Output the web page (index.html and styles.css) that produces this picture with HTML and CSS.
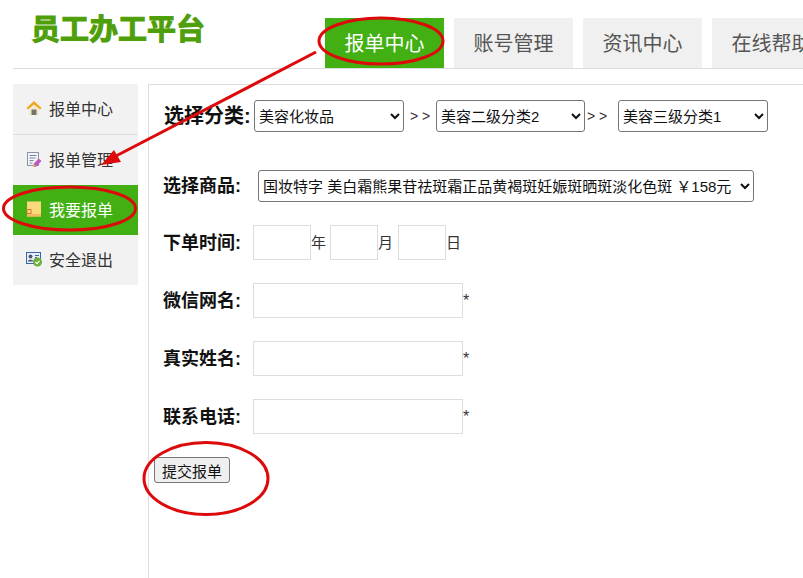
FILE: index.html
```html
<!DOCTYPE html>
<html lang="zh">
<head>
<meta charset="utf-8">
<title>员工办工平台</title>
<link rel="stylesheet" href="styles.css">
</head>
<body>
<div class="page">
  <header class="header">
    <div class="logo">员工办工平台</div>
    <nav class="tabs">
      <a class="tab active">报单中心</a>
      <a class="tab">账号管理</a>
      <a class="tab">资讯中心</a>
      <a class="tab">在线帮助</a>
    </nav>
  </header>
  <div class="main">
    <aside class="side">
      <a class="item">
        <svg class="ico" viewBox="0 0 16 16"><path d="M.5 8 8 1l7.500 7-1.500 1.500L8 4.500 2 9.500z" fill="#f2a51e"/><path d="M3 9.500 8 5.200l5 4.300V15H3z" fill="#f3e9cf"/><rect x="5.500" y="9.500" width="5" height="5.500" fill="#77736e"/></svg>
        报单中心</a>
      <a class="item">
        <svg class="ico" viewBox="0 0 16 16"><rect x="1.500" y="1.500" width="11" height="13" fill="#f4f4f8" stroke="#8a93a8"/><path d="M3.500 4.500h7M3.500 7h6M3.500 9.500h4M3.500 12h3" stroke="#7a86a0"/><path d="m7.500 13 5-5.500 3 2.500-5 5.500-3 .5z" fill="#b95cc0"/><path d="m7.500 13 2 2-3 .5z" fill="#e8c030"/></svg>
        报单管理</a>
      <a class="item on">
        <svg class="ico large" viewBox="0 0 16 16"><rect x="1" y=".5" width="14" height="15" fill="#fdd97e"/><rect x="1" y="13" width="14" height="2.500" fill="#f6b860"/><rect x="1" y="8.500" width="4" height="4" fill="none" stroke="#cf7d33"/></svg>
        我要报单</a>
      <a class="item">
        <svg class="ico" viewBox="0 0 16 16"><rect x=".5" y="1.500" width="14" height="11" fill="#e8eef8" stroke="#3a62b0"/><circle cx="4.500" cy="5.500" r="2" fill="#50586a"/><path d="M1.800 10.500c0-2.500 5.400-2.500 5.400 0z" fill="#50586a"/><path d="M9 4.500h4M9 6.500h2" stroke="#3a62b0"/><circle cx="11.500" cy="11" r="4.500" fill="#6cb03c"/><path d="m9.500 11 1.500 1.600 2.600-2.800" fill="none" stroke="#fff" stroke-width="1.200"/></svg>
        安全退出</a>
    </aside>
    <form class="content">
      <div class="row-cat">
        <label class="big">选择分类:</label>
        <select class="sel s1"><option>美容化妆品</option></select>
        <span class="gt g1">&gt; &gt;</span>
        <select class="sel s2"><option>美容二级分类2</option></select>
        <span class="gt g2">&gt; &gt;</span>
        <select class="sel s3"><option>美容三级分类1</option></select>
      </div>
      <div class="row-prod">
        <label class="lab">选择商品:</label>
        <select class="sel prod"><option>国妆特字 美白霜熊果苷祛斑霜正品黄褐斑妊娠斑晒斑淡化色斑 ￥158元</option></select>
      </div>
      <div class="row">
        <label class="lab">下单时间:</label>
        <input class="ipt y"><span class="u">年</span>
        <input class="ipt d"><span class="u wide">月</span>
        <input class="ipt d"><span class="u">日</span>
      </div>
      <div class="row">
        <label class="lab">微信网名:</label>
        <input class="ipt w"><span class="star">*</span>
      </div>
      <div class="row">
        <label class="lab">真实姓名:</label>
        <input class="ipt w"><span class="star">*</span>
      </div>
      <div class="row">
        <label class="lab">联系电话:</label>
        <input class="ipt w"><span class="star">*</span>
      </div>
      <button type="button" class="btn">提交报单</button>
    </form>
  </div>
  <svg class="marks" viewBox="0 0 803 578" width="803" height="578">
    <g fill="none" stroke="#dc0a0a" stroke-width="3">
      <ellipse cx="381" cy="41" rx="62" ry="23"/>
      <ellipse cx="69.500" cy="208.500" rx="66" ry="21.500"/>
      <ellipse cx="206" cy="478.500" rx="62" ry="36"/>
      <path d="M316 52 114 157"/>
    </g>
    <path d="m101 165 13-15 7 12z" fill="#dc0a0a"/>
  </svg>
</div>
</body>
</html>
```

FILE: styles.css
```css
* { box-sizing: border-box; }
html, body { margin: 0; padding: 0; }
body {
  background: #fff;
  color: #111;
  font-family: "Liberation Sans", "Noto Sans CJK SC", sans-serif;
  font-size: 14px;
  overflow: hidden;
}
.page { position: relative; width: 803px; height: 578px; overflow: hidden; }
.header {
  display: flex;
  height: 69px;
  margin-left: 13px;
  border-bottom: 1px solid #ddd;
}
.logo {
  flex: none;
  width: 312px;
  padding: 12px 0 0 18px;
  font-size: 29px;
  line-height: 36px;
  font-weight: 700;
  color: #4f9f0a;
  -webkit-text-stroke: 1px #4f9f0a;
}
.tabs { display: flex; gap: 10px; padding-top: 18px; flex: none; }
.tab {
  width: 119px;
  height: 50px;
  background: #f0f0f0;
  color: #555;
  font-size: 20px;
  line-height: 52px;
  text-align: center;
}
.tab.active { background: #42b012; color: #fff; }
.main { display: flex; margin-top: 15px; margin-left: 13px; }
.side { width: 125px; height: 201px; background: #f2f2f2; flex: none; }
.item {
  display: flex;
  align-items: center;
  gap: 7px;
  height: 50px;
  padding-left: 13px;
  padding-bottom: 2px;
  font-size: 16px;
  color: #333;
}
.item:first-child { height: 51px; border-bottom: 1px solid #ddd; }
.item.on { background: #42b012; color: #fff; }
.ico { width: 16px; height: 16px; flex: none; }
.content {
  flex: 1;
  min-height: 494px;
  margin-left: 10px;
  border-left: 1px solid #ddd;
  border-top: 1px solid #ddd;
  padding-left: 14px;
}
.row-cat { display: flex; align-items: center; height: 32px; margin-top: 15px; }
.big { width: 90px; margin-left: 1px; padding-bottom: 4px; flex: none; font-size: 20px; font-weight: 700; color: #111; white-space: nowrap; }
.sel {
  height: 32px;
  border: 1px solid #767676;
  border-radius: 3px;
  background: #fff;
  color: #111;
  font-family: inherit;
  font-size: 15px;
  padding: 0;
  flex: none;
}
.s1 { width: 150px; }
.s2 { width: 149px; }
.s3 { width: 150px; }
.gt { font-size: 14px; color: #333; flex: none; }
.g1 { width: 32px; padding-left: 6px; }
.g2 { width: 33px; padding-left: 2px; }
.row-prod { display: flex; align-items: center; height: 32px; margin-top: 38px; }
.lab { width: 90px; padding-bottom: 4px; flex: none; font-size: 18px; font-weight: 700; color: #111; white-space: nowrap; }
.row-prod .lab { width: 95px; }
.prod { width: 496px; }
.row { display: flex; align-items: center; height: 35px; margin-top: 23px; }
.ipt {
  display: block;
  height: 35px;
  border: 1px solid #ddd;
  background: #fff;
  padding: 0;
  flex: none;
}
.y { width: 58px; }
.d { width: 48px; }
.w { width: 210px; }
.u { width: 19px; padding-bottom: 2px; flex: none; font-size: 15px; color: #333; }
.u.wide { width: 20px; }
.star { font-size: 16px; color: #333; }
.btn {
  display: block;
  margin: 23px 0 0 -9px;
  width: 76px;
  height: 26px;
  padding: 0;
  border: 1px solid #767676;
  border-radius: 3px;
  background: #efefef;
  color: #111;
  font-family: inherit;
  font-size: 15px;
}
.marks { position: absolute; left: 0; top: 0; pointer-events: none; }
```
